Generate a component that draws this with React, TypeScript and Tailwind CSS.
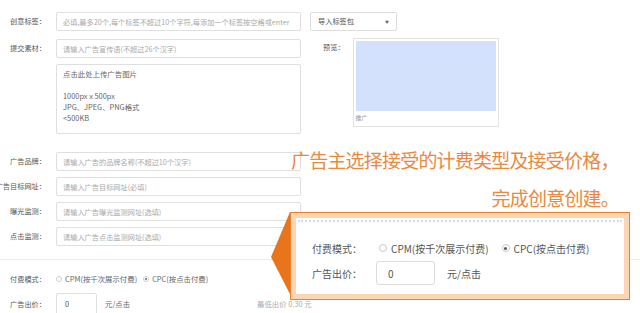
import React from 'react';

function Label({ text }: { text: string }) {
  return (
    <div className="flex w-[46px] shrink-0 justify-end whitespace-nowrap text-[7.2px] leading-[19px] text-[#555]">
      {text}
    </div>
  );
}

function Field({ label, placeholder }: { label: string; placeholder: string }) {
  return (
    <div className="flex h-[19px] items-center">
      <Label text={label} />
      <input
        readOnly
        placeholder={placeholder}
        className="ml-[10px] h-[19px] w-[245px] rounded-[2px] border border-[#dfdfdf] pl-[6px] pr-[2px] text-[7.2px] text-[#555] outline-none placeholder:text-[#a9a9a9]"
      />
    </div>
  );
}

function Radio({ checked, big }: { checked?: boolean; big?: boolean }) {
  return (
    <span
      className={
        big
          ? 'flex h-[8px] w-[8px] items-center justify-center rounded-full border border-[#c8c8c8] bg-white'
          : 'flex h-[6px] w-[6px] items-center justify-center rounded-full border border-[#cfcfcf] bg-white'
      }
    >
      {checked && (
        <span className={big ? 'h-[3px] w-[3px] rounded-full bg-[#555]' : 'h-[2px] w-[2px] rounded-full bg-[#666]'} />
      )}
    </span>
  );
}

export default function App() {
  return (
    <div className="relative h-[313px] w-[640px] overflow-hidden bg-white pt-[12px] font-['Noto_Sans_CJK_SC',sans-serif]">
      {/* 创意标签 */}
      <div className="flex h-[19px] items-center">
        <Field label="创意标签：" placeholder="必填,最多20个,每个标签不超过10个字符,每添加一个标签按空格或enter" />
        <div className="ml-[9px] flex h-[19px] w-[87px] items-center justify-between rounded-[2px] border border-[#dcdcdc] px-[7px] text-[7.2px] text-[#555]">
          <span>导入标签包</span>
          <span className="text-[4px] text-[#666]">▼</span>
        </div>
      </div>

      {/* 素材 + 预览 */}
      <div className="mt-[8px] flex">
        <div className="flex flex-col">
          <Field label="提交素材：" placeholder="请输入广告宣传语(不超过26个汉字)" />
          <div className="ml-[56px] mt-[6px] h-[70px] w-[245px] rounded-[2px] border border-[#dfdfdf] px-[6px] pt-[3px] text-[7.4px] leading-[11px] text-[#666]">
            点击此处上传广告图片
            <br />
            <br />
            1000px x 500px
            <br />
            JPG、JPEG、PNG格式
            <br />
            &lt;500KB
          </div>
        </div>
        <div className="ml-[22px] flex items-start">
          <span className="text-[7.2px] leading-[17px] text-[#555]">预览：</span>
          <div className="-mt-[1px] ml-[8px] flex h-[89px] w-[146px] flex-col border border-[#e3e3e3] p-[2px]">
            <div className="h-[70px] bg-[#d3e1fc]" />
            <span className="mt-[2px] text-[6px] leading-[10px] text-[#999]">推广</span>
          </div>
        </div>
      </div>

      {/* 品牌 / 网址 / 监测 */}
      <div className="mt-[18px] flex flex-col gap-[6px]">
        <Field label="广告品牌：" placeholder="请输入广告的品牌名称(不超过10个汉字)" />
        <Field label="广告目标网址：" placeholder="请输入广告目标网址(必填)" />
        <Field label="曝光监测：" placeholder="请输入广告曝光监测网址(选填)" />
        <Field label="点击监测：" placeholder="请输入广告点击监测网址(选填)" />
      </div>

      <div className="mt-[13px] border-t border-[#ececec]" />

      {/* 付费模式 */}
      <div className="mt-[13px] flex h-[12px] items-center text-[7.4px] text-[#666]">
        <Label text="付费模式：" />
        <span className="ml-[10px]">
          <Radio />
        </span>
        <span className="ml-[3px]">CPM(按千次展示付费)</span>
        <span className="ml-[6px]">
          <Radio checked />
        </span>
        <span className="ml-[3px]">CPC(按点击付费)</span>
      </div>

      {/* 出价 */}
      <div className="mt-[8px] flex items-center text-[7.4px] text-[#666]">
        <Label text="广告出价：" />
        <div className="ml-[10px] flex h-[22px] w-[41px] items-center rounded-[2px] border border-[#dfdfdf] px-[8px] text-[#555]">
          0
        </div>
        <span className="ml-[8px]">元/点击</span>
        <span className="ml-[127px] text-[#aaa]">最低出价 0.30 元</span>
      </div>

      {/* 注释文字 */}
      <div className="absolute left-[291px] top-[141px] w-[328px] text-[19px] leading-[38px] tracking-[-0.8px] text-[#e8893f]">
        <div className="whitespace-nowrap">广告主选择接受的计费类型及接受价格，</div>
        <div className="text-right">完成创意创建。</div>
      </div>

      {/* 箭头 */}
      <svg className="absolute left-[270px] top-[212px]" width="30" height="90" viewBox="0 0 30 90">
        <polygon points="20,0 1,45 23,88 28,88 28,0" fill="#e8741c" />
      </svg>

      {/* 放大框 */}
      <div className="absolute left-[290px] top-[212px] h-[88px] w-[340px] border border-[#e9822f] bg-[#fbd6b5] p-[5px]">
        <div className="flex h-full flex-col bg-white px-[2px] pt-[2px]">
          <div className="border-t-2 border-dotted border-[#d3dbe6]" />
          <div className="flex flex-col pl-[14px] text-[10px] text-[#555]">
            <div className="mt-[19px] flex h-[14px] items-center">
              <span className="w-[50px]">付费模式：</span>
              <span className="ml-[17px]">
                <Radio big />
              </span>
              <span className="ml-[4px]">CPM(按千次展示付费)</span>
              <span className="ml-[13px]">
                <Radio big checked />
              </span>
              <span className="ml-[4px]">CPC(按点击付费)</span>
            </div>
            <div className="mt-[6px] flex items-center">
              <span className="w-[50px]">广告出价：</span>
              <div className="ml-[14px] flex h-[24px] w-[59px] items-center rounded-[3px] border border-[#dcdcdc] px-[11px]">
                0
              </div>
              <span className="ml-[12px]">元/点击</span>
            </div>
          </div>
        </div>
      </div>
    </div>
  );
}
